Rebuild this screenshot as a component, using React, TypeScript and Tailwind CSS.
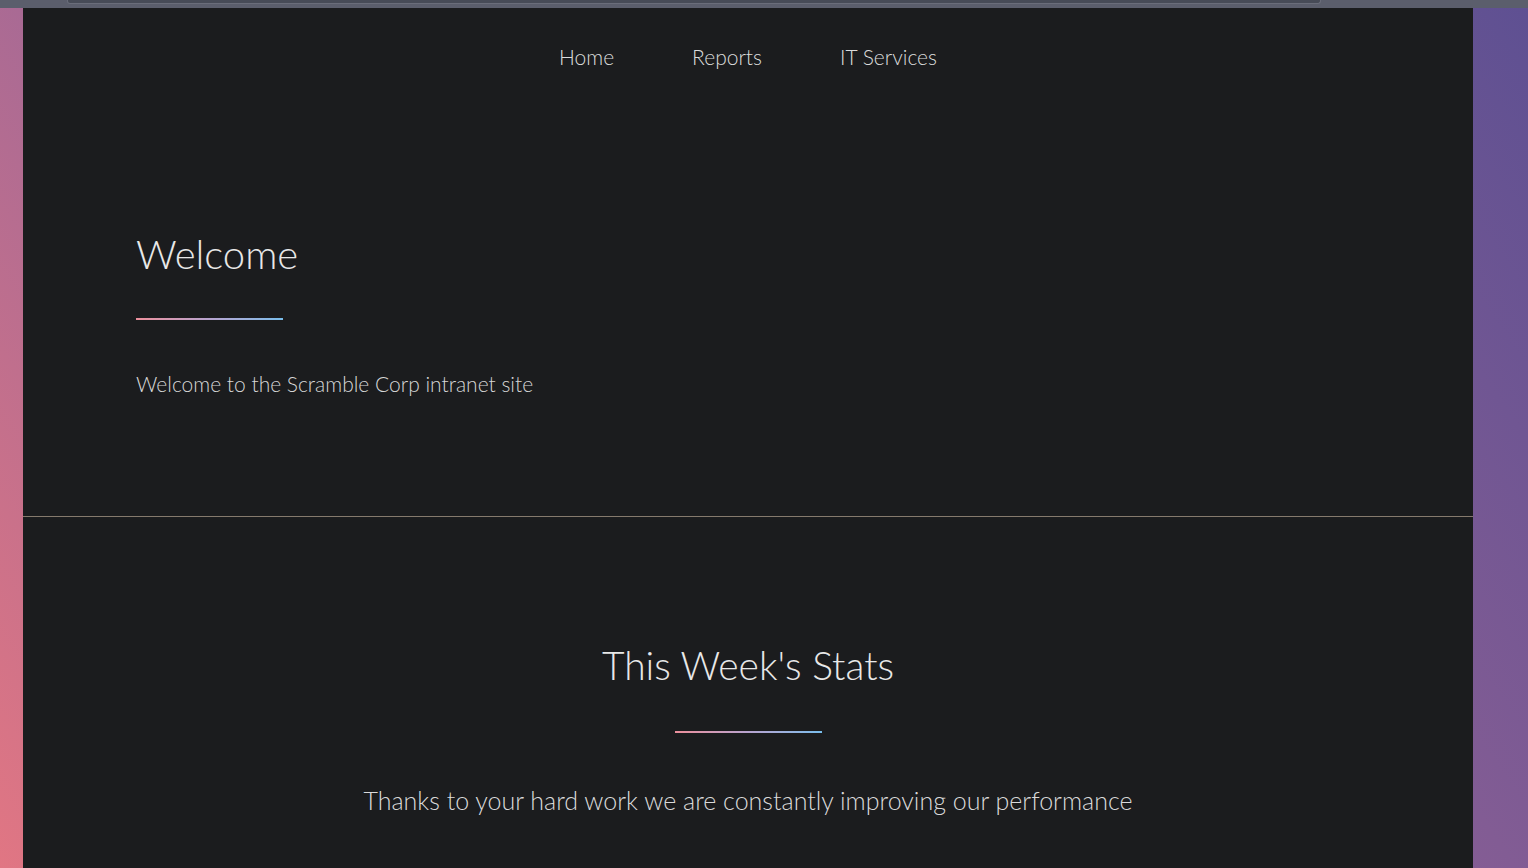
import React from 'react';

const navLinks = ['Home', 'Reports', 'IT Services'];

const GradientRule: React.FC<{ centered?: boolean }> = ({ centered }) => (
  <div
    className={`h-[2px] w-[147px] bg-linear-to-r from-[#ec8f9c] via-[#b7a3cf] to-[#78bdec] ${centered ? 'mx-auto' : ''}`}
  />
);

const App: React.FC = () => {
  return (
    <div
      className="flex h-[868px] flex-col overflow-hidden bg-[linear-gradient(55deg,#e17683_0%,#a96a94_29%,#825c94_71%,#5e5092_100%)]"
      style={{ fontFamily: 'Lato, "Open Sans", sans-serif' }}
    >
      {/* top scroll strip */}
      <div className="h-2 shrink-0 bg-[#5b5e6c]">
        <div className="ml-[67px] h-1 w-[1254px] rounded-b-[3px] border border-t-0 border-[#6a6d7a] bg-[#474b57]" />
      </div>

      <main className="ml-[23px] mr-[55px] flex-1 bg-[#1b1c1e] text-[#e8e8e8]">
        {/* Nav */}
        <nav className="flex h-[98px] items-center justify-center gap-[78px] text-[21px] font-light text-[#dcdcdc]">
          {navLinks.map((link) => (
            <a key={link} href="#" className="hover:text-white">
              {link}
            </a>
          ))}
        </nav>

        {/* Welcome */}
        <section className="px-[113px] pt-[120px] pb-[118px]">
          <h1 className="text-[40px] leading-[56px] font-light">Welcome</h1>
          <div className="mt-[36px]">
            <GradientRule />
          </div>
          <p className="mt-[50px] text-[21px] leading-[28px] font-light text-[#d6d6d6]">
            Welcome to the Scramble Corp intranet site
          </p>
        </section>

        <div className="border-t border-[#857a6d]" />

        {/* Stats */}
        <section className="pt-[120px] text-center">
          <h2 className="text-[39px] leading-[56px] font-light">This Week's Stats</h2>
          <div className="mt-[38px]">
            <GradientRule centered />
          </div>
          <p className="mt-[49px] text-[25px] leading-[36px] font-light text-[#dadada]">
            Thanks to your hard work we are constantly improving our performance
          </p>
        </section>
      </main>
    </div>
  );
};

export default App;
